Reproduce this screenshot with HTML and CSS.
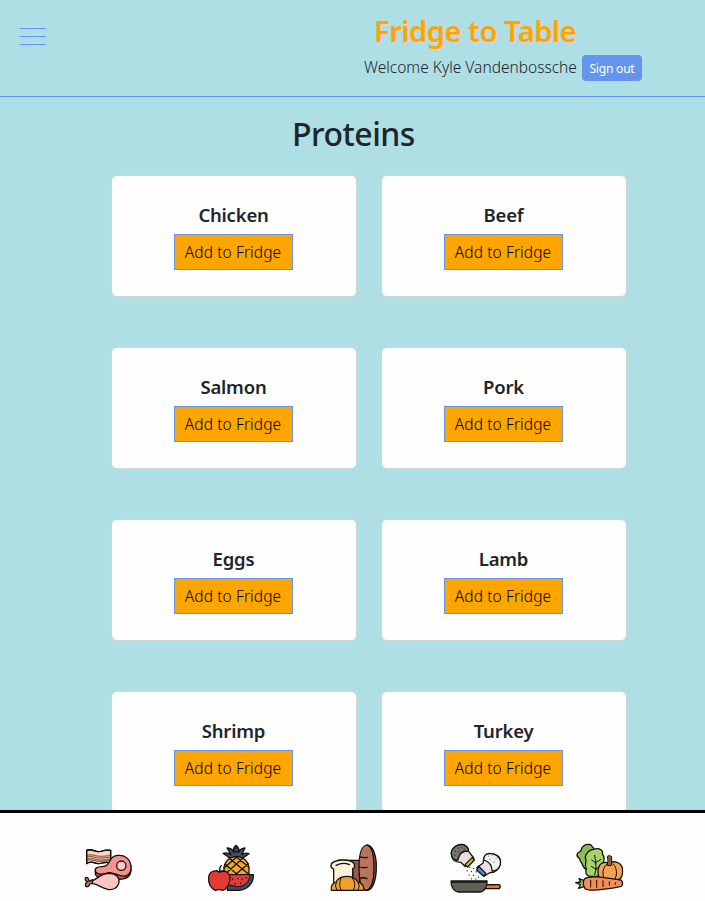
FILE: index.html
```html
<!DOCTYPE html>
<html lang="en">
<head>
<meta charset="utf-8">
<title>Fridge to Table</title>
<link rel="stylesheet" href="styles.css">
</head>
<body>
<header class="header">
  <button class="menu" aria-label="Menu"><span></span><span></span><span></span></button>
  <div class="brand">
    <h1 class="logo">Fridge to Table</h1>
    <div class="welcome"><span class="greeting">Welcome Kyle Vandenbossche</span><button class="signout">Sign out</button></div>
  </div>
</header>
<main class="main">
  <h2 class="title">Proteins</h2>
  <div class="cards">
    <section class="card"><h3>Chicken</h3><button class="add">Add to Fridge</button></section>
    <section class="card"><h3>Beef</h3><button class="add">Add to Fridge</button></section>
    <section class="card"><h3>Salmon</h3><button class="add">Add to Fridge</button></section>
    <section class="card"><h3>Pork</h3><button class="add">Add to Fridge</button></section>
    <section class="card"><h3>Eggs</h3><button class="add">Add to Fridge</button></section>
    <section class="card"><h3>Lamb</h3><button class="add">Add to Fridge</button></section>
    <section class="card"><h3>Shrimp</h3><button class="add">Add to Fridge</button></section>
    <section class="card"><h3>Turkey</h3><button class="add">Add to Fridge</button></section>
  </div>
</main>
<nav class="tabs">
  <svg class="icon" viewBox="0 0 225 198">
    <path d="M50 46Q60 42 72 47T96 48T122 46V84Q110 80 97 84T72 83T50 86Z" fill="#f9d3c4"/>
    <path d="M52 61Q64 57 77 62T121 61M52 72Q64 68 77 73T121 72" stroke="#b5654c" stroke-width="4"/>
    <path d="M50 66Q62 62 75 67T122 66M50 76Q62 72 75 77T122 76" stroke-width="2"/>
    <path d="M50 46Q60 42 72 47T96 48T122 46V84Q110 80 97 84T72 83T50 86Z"/>
    <path d="M76 108V119Q87 134 110 130L150 133Q181 132 183 107V92Z" fill="#b86650"/>
    <path d="M120 77C128 58 157 56 173 71C187 87 187 114 169 122C153 129 134 112 117 113C99 119 82 119 76 109C73 96 87 96 98 95C111 94 114 87 120 77Z" fill="#f4938d"/>
    <circle cx="154" cy="92" r="14" fill="#fbc9c5"/>
    <path d="M68 134L57 139Q55 124 47 128Q42 134 52 140Q43 147 48 154Q56 158 59 147L69 145Z" fill="#d9715e"/>
    <path d="M67 138C86 128 94 115 119 115C138 116 149 127 147 141C145 158 129 166 114 163C95 160 85 148 68 146Z" fill="#fac6c5"/>
  </svg>
  <svg class="icon" viewBox="-5 0 225 198">
    <path d="M104 68L85 55Q99 51 109 59L97 39Q111 39 119 53Q112 41 124 31Q137 42 130 53Q137 40 151 39L141 59Q151 51 163 56L145 69Z" fill="#435064"/>
    <path d="M124 35Q131 44 124 53Q118 43 124 35Z" fill="#b3c8ae" stroke-width="3"/>
    <path d="M107 69Q125 60 144 69Q160 78 163 98V122H88V96Q92 77 107 69Z" fill="#f7a62c"/>
    <path d="M104 70L162 118M91 88L131 121M125 66L163 97M144 70L91 118M126 66L88 99M161 86L120 121" stroke-width="4"/>
    <path d="M97 119H176C178 145 158 165 132 166H98Z" fill="#3f4b61"/>
    <path d="M101 119H166C165 142 147 156 126 155L101 149Z" fill="#e13c3d" stroke-width="3"/>
    <path d="M114 132v1M129 130v1M142 132v1M155 128v1M122 145v1M138 144v1" stroke-width="4"/>
    <path d="M73 111C88 104 105 110 106 128C107 147 94 165 84 166Q73 162 62 166C49 162 40 145 42 126C44 109 60 104 73 111Z" fill="#e23b34"/>
    <path d="M65 106Q74 115 85 107M75 109Q73 99 80 92"/>
  </svg>
  <svg class="icon" viewBox="2 0 225 198">
    <path d="M64 78Q70 74 79 76H133V165H112V91Z" fill="#9c5946"/>
    <path d="M156 30C173 32 184 63 183 97C183 136 172 162 158 166H149Z" fill="#8e4f3e"/>
    <path d="M154 30C172 34 176 67 176 99C176 132 169 161 153 166C136 164 131 132 131 97C131 65 137 33 154 30Z" fill="#ba735d"/>
    <path d="M133 65Q145 70 157 67M132 96Q143 99 155 97M133 130Q144 126 155 131"/>
    <path d="M59 79Q83 71 108 79C121 85 120 99 112 101V165H55V102C43 98 44 84 59 79Z" fill="#fff0d9"/>
    <path d="M62 91Q83 81 102 89"/>
    <path d="M48 166C45 154 53 143 62 141C73 120 112 117 128 141C140 145 147 154 144 166Z" fill="#efa12b"/>
    <path d="M78 166Q68 151 77 129M111 129Q125 148 114 166M65 166Q56 153 63 141M128 166Q136 153 128 141" stroke-width="3"/>
  </svg>
  <svg class="icon" viewBox="-5.25 0 225 198">
    <path d="M37 67C30 47 43 31 64 28C77 29 88 40 87 50L102 69L77 95L63 82Q42 82 37 67Z" fill="#efdadd"/>
    <path d="M37 66C29 48 43 30 65 28C79 30 86 39 86 48C66 48 58 56 54 76Q40 75 37 66Z" fill="#77766e"/>
    <path d="M98 67L104 75L84 96L76 89Z" fill="#b8c73a"/>
    <path d="M47 48v1M55 39v1M65 37v1M73 42v1M58 50v1M45 60v1" stroke-width="3"/>
    <path d="M111 98L130 84C130 68 137 54 150 55C170 55 183 65 182 82C181 102 167 114 150 113L134 123Z" fill="#f0dde3"/>
    <path d="M132 75C132 57 145 53 160 57C177 62 185 75 182 88C177 104 166 108 157 108C157 91 149 80 132 75Z" fill="#edf2ee"/>
    <path d="M116 93L111 106L132 124L138 115Z" fill="#4e8bd9"/>
    <path d="M146 63v1M158 60v1M169 70v1M151 73v1M163 81v1" stroke-width="3" stroke="#718078"/>
    <path d="M90 97v1M101 100v1M82 107v1M95 109v1M109 110v1M88 120v1M101 121v1M116 126v1M95 131v1M108 132v1" stroke-width="3"/>
    <path d="M135 149H179Q184 155 179 161H135Z" fill="#f46d35"/>
    <path d="M148 149H162"/>
    <path d="M34 138H142C143 155 134 171 119 171H57C42 170 33 155 34 138Z" fill="#625f57"/>
    <path d="M36 142H140" stroke-width="3"/>
  </svg>
  <svg class="icon" viewBox="-3 0 225 198">
    <path d="M60 38Q69 26 86 29L98 43L84 109L73 105C60 97 63 87 56 80L52 70C40 63 45 51 56 49Z" fill="#8dbc59"/>
    <path d="M77 52C84 42 94 44 99 42C113 38 125 47 121 57C131 67 124 76 125 83C129 96 117 100 117 113L107 124H82Q67 118 73 101C66 91 73 84 72 75C66 63 72 59 77 52Z" fill="#a8d36b"/>
    <path d="M98 119Q106 96 98 61M102 84L89 75M102 82L117 73M103 103L88 94M103 101L115 94" stroke-width="3"/>
    <path d="M139 85C153 76 176 80 181 99C184 116 179 132 168 134H117C105 125 105 94 119 85Q130 79 139 85Z" fill="#f6a153"/>
    <path d="M133 89C121 99 120 121 127 132M154 87C166 99 166 121 158 134" stroke-width="3"/>
    <path d="M135 90L138 78L136 64Q142 59 149 65V91Q142 94 135 90Z" fill="#945a42" stroke-width="3"/>
    <path d="M67 137L51 131L56 141L41 143L55 149L50 160L68 154Z" fill="#a5c865"/>
    <path d="M67 132C81 120 118 126 177 135Q186 145 178 154C122 165 83 170 69 161Q60 146 67 132Z" fill="#f58d59"/>
    <path d="M86 136V156M104 136V157M123 137V155M142 140V151M160 143V148" stroke-width="3"/>
  </svg>
</nav>
</body>
</html>
```
FILE: styles.css
```css
* { box-sizing: border-box; }
body {
  margin: 0;
  height: 901px;
  overflow: hidden;
  display: flex;
  flex-direction: column;
  background: #aedfe5;
  color: #212529;
  font-family: "Segoe UI", "Noto Sans", sans-serif;
}
h1, h2, h3 { margin: 0; font-weight: 500; }
button { font-family: inherit; padding: 0; }
.header {
  flex: none;
  height: 97px;
  border-bottom: 1px solid cornflowerblue;
  display: flex;
  justify-content: space-between;
  padding: 10px 63px 0 20px;
}
.menu {
  width: 26px;
  height: 17px;
  margin-top: 18px;
  border: 0;
  background: none;
  display: flex;
  flex-direction: column;
  justify-content: space-between;
}
.menu span { width: 26px; height: 1px; background: #6495ff; }
.brand { width: 278px; }
.logo {
  margin-left: 10px;
  font-size: 29px;
  font-weight: 600;
  letter-spacing: -0.45px;
  line-height: 41px;
  color: orange;
  text-shadow: 1px 1px 1px #f7cdd0;
  white-space: nowrap;
}
.welcome { display: flex; justify-content: space-between; margin-top: 4px; }
.greeting { font-size: 15.5px; font-weight: 300; line-height: 24px; white-space: nowrap; }
.signout {
  width: 60px;
  height: 26px;
  border: 0;
  border-radius: 4px;
  background: cornflowerblue;
  color: #fff;
  font-size: 12px;
  letter-spacing: -0.2px;
  white-space: nowrap;
}
.main { flex: 1; min-height: 0; overflow: hidden; }
.title {
  margin-top: 14px;
  height: 64px;
  text-align: center;
  font-size: 32px;
  letter-spacing: -0.5px;
  line-height: 46px;
  padding-left: 2px;
}
.cards {
  margin-left: 111px;
  display: grid;
  grid-template-columns: 246px 246px;
  gap: 50px 24px;
}
.card {
  height: 122px;
  border: 1px solid #d2d5d7;
  border-radius: 6px;
  background: #fefefe;
  padding: 26px 1px 0 0;
  display: flex;
  flex-direction: column;
  align-items: center;
}
.card h3 {
  font-size: 18.5px;
  font-weight: 600;
  letter-spacing: -0.2px;
  line-height: 26px;
  margin-bottom: 6px;
}
.add {
  width: 119px;
  height: 36px;
  margin-right: 1px;
  border: 1px solid cornflowerblue;
  background: orange;
  color: #000;
  font-size: 15.5px;
  font-weight: 300;
  letter-spacing: 0.1px;
  white-space: nowrap;
}
.tabs {
  flex: none;
  height: 91px;
  border-top: 3px solid #000;
  background: #fefefe;
  display: flex;
  gap: 47.75px;
  padding: 22px 0 0 70px;
}
.icon {
  flex: none;
  width: 75px;
  height: 66px;
  fill: none;
  stroke: #11110f;
  stroke-width: 3.8;
  stroke-linecap: round;
  stroke-linejoin: round;
}
```
